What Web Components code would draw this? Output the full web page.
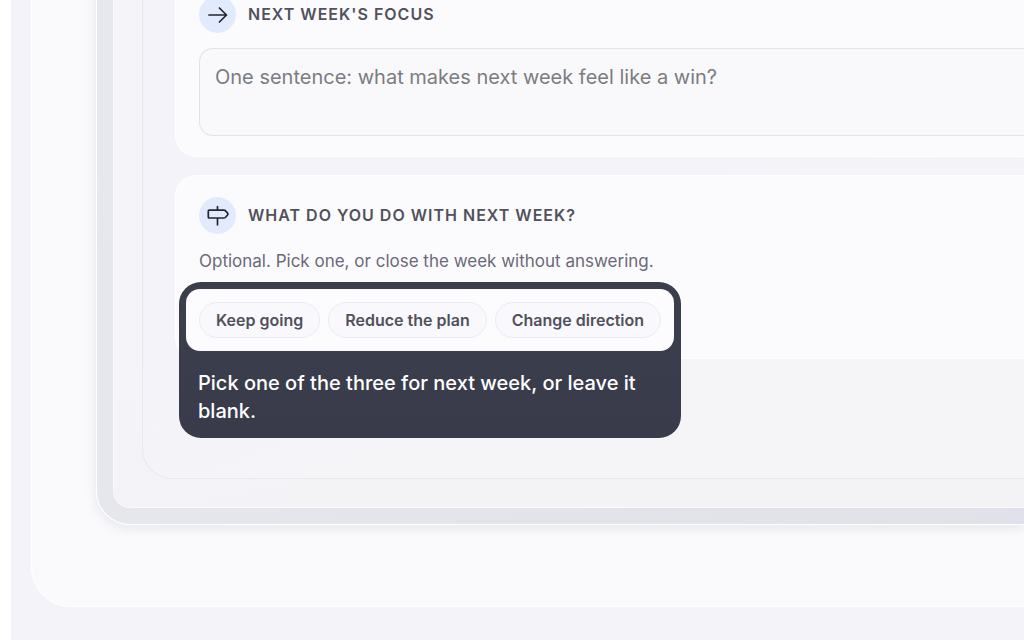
<!DOCTYPE html>
<html lang="en">
<head>
<meta charset="utf-8">
<meta name="viewport" content="width=device-width, initial-scale=1">
<title>Weekly review</title>
<style>
body { margin: 0; background: #fff; font-family: Inter, "Liberation Sans", sans-serif; color: #52515b; }
</style>
</head>
<body>
<review-stage>
  <device-frame>
    <review-card heading="Next week's focus" icon="arrow">
      <focus-field></focus-field>
    </review-card>
    <review-card heading="What do you do with next week?" icon="sign">
      <hint-text>Optional. Pick one, or close the week without answering.</hint-text>
      <coach-mark>
        <choice-chip>Keep going</choice-chip>
        <choice-chip>Reduce the plan</choice-chip>
        <choice-chip>Change direction</choice-chip>
        <span slot="tip">Pick one of the three for next week, or leave it blank.</span>
      </coach-mark>
    </review-card>
  </device-frame>
</review-stage>
<script>
function define(name, html, setup) {
  const template = document.createElement('template');
  template.innerHTML = html;
  customElements.define(name, class extends HTMLElement {
    constructor() {
      super();
      this.attachShadow({ mode: 'open' }).append(template.content.cloneNode(true));
    }
    connectedCallback() { if (setup) setup(this, this.shadowRoot); }
  });
}

/* Stage stays scrolled to the end of the review: content is anchored to the bottom edge. */
define('review-stage', `
<style>
:host { display: flex; flex-direction: column; justify-content: flex-end; box-sizing: border-box; height: 100vh; overflow: hidden;
  margin-left: 11px; padding: 0 0 33px 20px; background: #f4f3f9; }
.panel { flex: none; padding: 80px 0 81px 64px; background: #fafafc;
  border: 1px solid #fff; border-width: 1px 0 1px 1px; border-radius: 40px 0 0 40px; }
</style>
<div class="panel"><slot></slot></div>`);

define('device-frame', `
<style>
:host { display: block; padding: 16px 0 16px 16px; background: linear-gradient(100deg, #e7e8ed, #e4e4ec 40%, #e2e3e9 80%, #e1e1eb);
  border: 1px solid #fff; border-width: 1px 0 1px 1px; border-radius: 34px 0 0 34px;
  box-shadow: 0 3px 12px rgba(60, 55, 100, .11); }
.screen { padding: 28px 0 28px 28px; background: linear-gradient(170deg, #f4f4f9 60%, #f3f3f5);
  border: 1px solid #fafafc; border-width: 1px 0 1px 1px; border-radius: 17px 0 0 17px; }
.shell { display: flex; flex-direction: column; gap: 18px; padding: 32px 0 119px 32px;
  background: linear-gradient(160deg, #f4f3f9 50%, #f5f5f7 80%);
  border: 1px solid #e9e9ed; border-width: 1px 0 1px 1px; border-radius: 30px 0 0 30px; }
</style>
<div class="screen"><div class="shell"><slot></slot></div></div>`);

define('review-card', `
<style>
:host { display: block; padding: 21px 0 20px 23px; background: #fbfbfe; border: 1px solid #fff; border-width: 1px 0 1px 1px; border-radius: 22px 0 0 22px; }
header { display: flex; align-items: center; gap: 12px; }
.badge { display: grid; place-items: center; width: 37px; height: 37px; border-radius: 50%; background: #e1ebfd; }
svg { display: block; width: 24px; height: 24px; fill: none; stroke: #24252d; stroke-width: 1.7; stroke-linecap: round; stroke-linejoin: round; }
h2 { margin: 0; padding-bottom: 2px; font-size: 16px; line-height: 24px; font-weight: 600; letter-spacing: 1px; text-transform: uppercase; }
</style>
<header><span class="badge"></span><h2></h2></header>
<slot></slot>`, (host, root) => {
  const icons = {
    arrow: '<path d="M3 12h17.500M13.400 5l7.100 7-7.100 7"/>',
    sign: '<path d="M11.500 2.500v3.700M11.500 14v6.800M3.200 6.200h14.800q.8 0 1.300.5l2.300 2.500q.8.9 0 1.800l-2.300 2.500q-.5.5-1.300.5H3.200q-.9 0-.9-.9V7.100q0-.9.9-.9z"/>'
  };
  root.querySelector('h2').textContent = host.getAttribute('heading');
  root.querySelector('.badge').innerHTML = '<svg viewBox="0 0 24 24" aria-hidden="true">' + icons[host.getAttribute('icon')] + '</svg>';
});

define('focus-field', `
<style>
:host { display: block; margin-top: 15px; }
textarea { display: block; box-sizing: border-box; width: 100%; height: 88px; margin: 0; padding: 14px 15px; resize: none; outline: 0;
  font: 400 20px/28px Inter, "Liberation Sans", sans-serif; color: #52515b; background: #f9f9fc;
  border: 1px solid #e2e2e8; border-right: 0; border-radius: 14px 0 0 14px; }
textarea::placeholder { color: #7c7c80; opacity: 1; }
</style>
<textarea aria-label="Next week's focus" placeholder="One sentence: what makes next week feel like a win?"></textarea>`);

define('hint-text', `
<style>
:host { display: block; margin: 13px 0 27px; }
p { margin: 0; font-size: 17px; line-height: 28px; color: #6b6978; }
</style>
<p><slot></slot></p>`);

define('choice-chip', `
<style>
:host { display: block; }
button { display: block; height: 36px; margin: 0; padding: 0 16px; border: 1px solid #ececf0; border-radius: 18px;
  background: #f9f8fd; color: #52515b; font: 600 16px/24px Inter, "Liberation Sans", sans-serif; white-space: nowrap; }
</style>
<button type="button"><slot></slot></button>`);

/* Callout that rings the choices and hangs below them, over the card's edge. */
define('coach-mark', `
<style>
:host { display: block; position: relative; width: max-content; }
.choices { display: flex; gap: 8px; position: relative; z-index: 2; }
.callout { position: absolute; z-index: 1; inset: -20px -20px auto; padding: 7px; border-radius: 22px; background: linear-gradient(#3b3f4c, #393b4a); }
.window { height: 62px; border-radius: 14px; background: #fcfcfe; }
p { margin: 0; padding: 18px 12px 6px; font-size: 20px; line-height: 28px; font-weight: 500; color: #fff; }
</style>
<div class="choices"><slot></slot></div>
<div class="callout" role="note"><div class="window"></div><p><slot name="tip"></slot></p></div>`);
</script>
</body>
</html>
